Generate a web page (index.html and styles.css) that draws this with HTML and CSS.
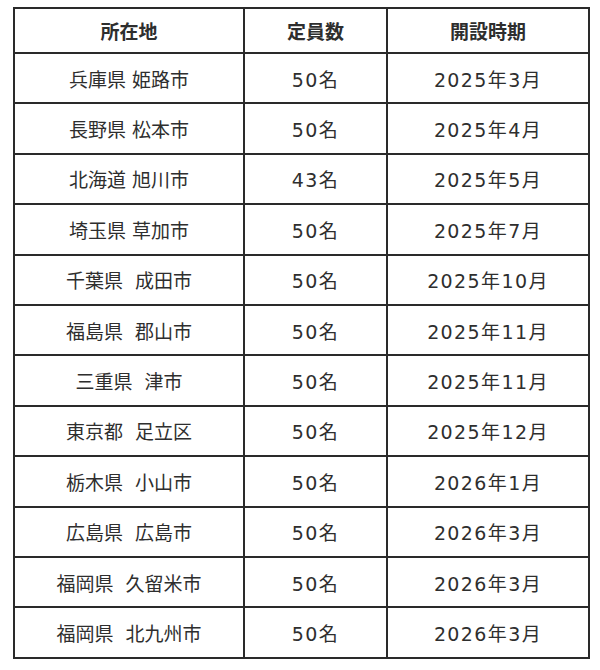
FILE: index.html
```html
<!DOCTYPE html>
<html lang="ja">
<head>
<meta charset="utf-8">
<link rel="stylesheet" href="styles.css">
</head>
<body>
<table class="tbl">
  <colgroup><col class="c1"><col class="c2"><col class="c3"></colgroup>
  <thead>
    <tr><th>所在地</th><th>定員数</th><th>開設時期</th></tr>
  </thead>
  <tbody>
    <tr><td>兵庫県 姫路市</td><td>50名</td><td>2025年3月</td></tr>
    <tr><td>長野県 松本市</td><td>50名</td><td>2025年4月</td></tr>
    <tr><td>北海道 旭川市</td><td>43名</td><td>2025年5月</td></tr>
    <tr><td>埼玉県 草加市</td><td>50名</td><td>2025年7月</td></tr>
    <tr><td>千葉県  成田市</td><td>50名</td><td>2025年10月</td></tr>
    <tr><td>福島県  郡山市</td><td>50名</td><td>2025年11月</td></tr>
    <tr><td>三重県  津市</td><td>50名</td><td>2025年11月</td></tr>
    <tr><td>東京都  足立区</td><td>50名</td><td>2025年12月</td></tr>
    <tr><td>栃木県  小山市</td><td>50名</td><td>2026年1月</td></tr>
    <tr><td>広島県  広島市</td><td>50名</td><td>2026年3月</td></tr>
    <tr><td>福岡県  久留米市</td><td>50名</td><td>2026年3月</td></tr>
    <tr><td>福岡県  北九州市</td><td>50名</td><td>2026年3月</td></tr>
  </tbody>
</table>
</body>
</html>
```
FILE: styles.css
```css
html, body {
  margin: 0;
  padding: 0;
  background: #ffffff;
}
body {
  padding: 7px 0 0 13px;
  font-family: "DejaVu Sans", "Noto Sans CJK JP", sans-serif;
  color: #2e2e2e;
}
.tbl {
  border-collapse: collapse;
  table-layout: fixed;
  width: 575px;
}
.c1 { width: 230px; }
.c2 { width: 143px; }
.c3 { width: 202px; }
.tbl th, .tbl td {
  border: 2px solid #2a2a2a;
  text-align: center;
  padding: 0;
  font-size: 19px;
  white-space: pre;
}
.tbl th {
  height: 43px;
  font-weight: 700;
  font-family: "Noto Sans CJK JP", sans-serif;
}
.tbl td {
  height: 48.4px;
  font-weight: 400;
}
.tbl td:nth-child(n+2) {
  letter-spacing: 1.4px;
}
```
